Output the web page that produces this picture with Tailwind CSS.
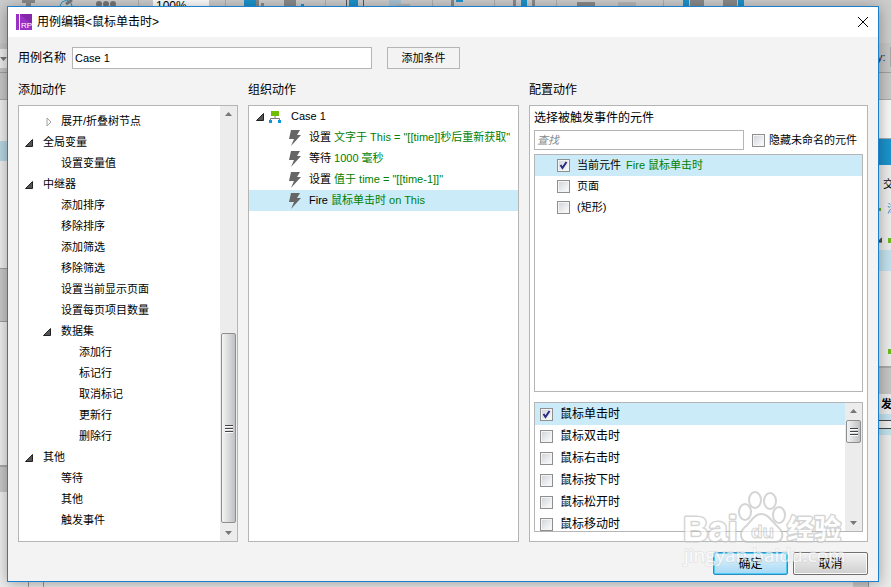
<!DOCTYPE html>
<html lang="zh-CN">
<head>
  <meta charset="UTF-8">
  <title>用例编辑</title>
  <meta name="viewport" content="width=device-width, initial-scale=1.0">
  <script src="https://cdn.jsdelivr.net/npm/@tailwindcss/browser@4"></script>
</head>
<body class="relative h-screen overflow-hidden bg-[#f0f0f0] font-['Liberation_Sans','Noto_Sans_CJK_SC',sans-serif] text-[11px] text-black">

  <!-- Shared icons -->
  <svg class="hidden">
    <symbol id="open" viewBox="0 0 8 8"><path d="M7.5 0.5V7.5H0.5Z" fill="#555" stroke="#222"/></symbol>
    <symbol id="closed" viewBox="0 0 6 10"><path d="M1 1L5 5L1 9Z" fill="#fff" stroke="#a0a0a0"/></symbol>
    <symbol id="bolt" viewBox="0 0 13 16"><path d="M2 0H11L8 5H12L2 16L5 9H0Z" fill="#666"/></symbol>
    <symbol id="check" viewBox="0 0 13 13"><path d="M3.5 6L5.5 9L9.5 3" fill="none" stroke="#2b2b80" stroke-width="2"/></symbol>
    <symbol id="up" viewBox="0 0 7 4"><path d="M0 4L3.5 0L7 4Z" fill="#777"/></symbol>
    <symbol id="down" viewBox="0 0 7 4"><path d="M0 0L3.5 4L7 0Z" fill="#777"/></symbol>
    <symbol id="grip" viewBox="0 0 8 9"><path d="M0 1.5H8M0 4.5H8M0 7.5H8" stroke="#444"/><path d="M0 2.5H8M0 5.5H8M0 8.5H8" stroke="#fff"/></symbol>
  </svg>

  <!-- Application window behind the dialog -->
  <div class="flex h-full flex-col" aria-hidden="true">
    <div class="h-[43px] shrink-0 bg-[#cdcdcd]">
      <svg class="h-2 w-[760px]" viewBox="0 0 760 8">
        <path d="M22 0H35V3H22ZM26 3H31V8H26ZM284 0H296V8H284ZM451 0H454V8H451ZM513 0H516V8H513ZM532 0H535V8H532ZM577 2H595V8H577ZM690 0H704V8H690ZM723 0H737V8H723Z" fill="#8a8a8a"/>
        <path d="M244 0H256V6H244ZM349 0H358V8H349ZM456 0H463V2H456ZM521 0H527V8H521ZM683 0H689V8H683ZM738 0H744V8H738ZM301 4H304V8H301Z" fill="#1b93cc"/>
        <path d="M256 0H259V6H256ZM261 3H264V6H261Z" fill="#8a8a8a"/>
        <path d="M346.5 0V8M363.5 0V8" stroke="#555"/>
        <path d="M138.5 0V8M225.5 0V8M325.5 0V8M432.5 0V8M494.5 0V8M556.5 0V8M663.5 0V8" stroke="#b0b0b0"/>
        <path d="M60 6L62 2L67 0L71 3L72 6" fill="none" stroke="#1b93cc"/>
        <path d="M66 4L72 0" stroke="#777" stroke-width="3"/>
        <circle cx="99" cy="4" r="3" fill="#777"/><circle cx="106" cy="4" r="3" fill="#777"/><circle cx="113" cy="4" r="3" fill="#777"/>
        <path d="M153 0H209V8H153Z" fill="#fff"/>
        <text x="156" y="10" font-size="12" fill="#000">100%</text>
        <path d="M389 0H401V6H389Z" fill="#a9c4d4"/>
        <path d="M618 2H636V8H618ZM396 4H410V6H396Z" fill="#b8b8b8"/>
      </svg>
    </div>
    <div class="flex h-[30px] shrink-0 justify-between border-b border-[#a0a0a0] bg-[#c6c6c6]">
      <div class="mt-1.5 flex h-[19px] w-3 items-center bg-[#eee]"><svg class="h-1 w-[7px]"><use href="#down"/></svg></div>
      <div class="flex w-[14px] items-center gap-1 pb-px">
        <span class="text-[#223]">y:</span>
        <div class="-mr-2 h-5 w-4 shrink-0 border border-[#aaa] bg-[#eee]"></div>
      </div>
    </div>
    <div class="h-[27px] shrink-0 border-b border-[#aaa] bg-[#c9c9c9]"></div>
    <div class="flex min-h-0 flex-1 justify-between">
      <div class="flex w-5 flex-col bg-[#f0f0f0]">
        <div class="mt-[41px] h-5 bg-[#b9d9e5]"></div>
        <div class="mt-[107px] h-[54px] border-y border-[#a0a0a0] bg-[#cacaca]"></div>
        <div class="mt-[143px] h-[27px] border-t-2 border-[#aaa] bg-[#cacaca]"></div>
      </div>
      <div class="mx-2 flex flex-1 justify-between self-end">
        <div class="h-1.5 w-4 border-x border-[#999]"></div>
        <div class="h-1.5 w-4 border-r border-[#999] bg-[#d0d0d0]"></div>
      </div>
      <div class="flex w-[14px] flex-col overflow-hidden bg-[#ececec] whitespace-nowrap">
        <div class="h-[38px] shrink-0 bg-[#f8f8f8]"></div>
        <div class="h-[27px] shrink-0 border-t border-[#aaa] bg-[#1b93cc]"></div>
        <div class="h-[38px] shrink-0 pl-1.5 leading-[38px]">交</div>
        <div class="flex h-3 shrink-0 items-center gap-1.5 pl-px text-[#1b93cc]"><span class="h-[3px] w-[3px] shrink-0 bg-[#6cae1c]"></span>添</div>
        <div class="mt-[15px] flex h-5 shrink-0 items-center gap-1.5"><svg class="h-2 w-[5px] shrink-0"><use href="#open"/></svg><span class="h-[5px] w-[5px] bg-[#6fb81c]"></span></div>
        <div class="h-[21px] shrink-0 bg-[#c2e2ee]"></div>
        <div class="mt-[78px] h-[5px] w-[3px] shrink-0 self-end bg-[#6fb81c]"></div>
        <div class="mt-3 h-7 shrink-0 border-t-2 border-[#aaa] bg-[#c6c6c6]"></div>
        <div class="h-5 shrink-0 pl-1 leading-5 font-bold">发</div>
        <div class="flex h-[21px] shrink-0 items-center bg-[#c2e2ee]"><div class="h-[9px] w-5 shrink-0 border border-[#444] bg-[#eee]"></div></div>
      </div>
    </div>
  </div>

  <!-- Case editor dialog -->
  <div role="dialog" aria-labelledby="title" class="absolute top-1.5 right-3 bottom-[5px] left-[7px] flex flex-col border border-[#1b7fcc] bg-[#f3f3f3] shadow-[0_2px_14px_rgba(0,0,0,0.35)]">
    <header class="flex h-[30px] shrink-0 items-center bg-white pr-2.5 pl-2">
      <svg class="h-4 w-4" viewBox="0 0 16 16">
        <path d="M0 0H3V16H0ZM4 0H16V16H4Z" fill="#9b30c4"/>
        <path d="M4 0H16V11Z" fill="#8427a8"/>
        <text x="5" y="14" font-size="8" fill="#fff">RP</text>
      </svg>
      <h1 id="title" class="ml-[5px] flex-1 text-xs">用例编辑&lt;鼠标单击时&gt;</h1>
      <button aria-label="关闭" class="h-[10px] w-[10px]">
        <svg class="h-full w-full overflow-visible" viewBox="0 0 10 10"><path d="M0 0L10 10M10 0L0 10" stroke="#000"/></svg>
      </button>
    </header>

    <main class="flex min-h-0 flex-1 flex-col px-2.5 pt-2.5 pb-1.5">
      <div class="flex h-[22px] shrink-0 items-center">
        <label for="case-name" class="w-[54px] text-xs">用例名称</label>
        <input id="case-name" value="Case 1" class="h-full w-[300px] border border-[#b5b5b5] bg-white px-0.5">
        <button class="ml-[15px] h-full w-[73px] border border-[#b5b5b5]">添加条件</button>
      </div>

      <div class="mt-3 grid min-h-0 flex-1 grid-cols-[220fr_271fr_339fr] grid-rows-[24px_minmax(0,1fr)] gap-x-2.5">
        <h2 class="text-xs leading-[18px]">添加动作</h2>
        <h2 class="text-xs leading-[18px]">组织动作</h2>
        <h2 class="text-xs leading-[18px]">配置动作</h2>

        <!-- Available actions -->
        <section class="flex overflow-hidden border border-[#b5b5b5] bg-white">
          <ul class="flex-1 pt-[5px] leading-[21px]">
            <li class="flex items-center gap-[9px] pl-[27px]"><svg class="h-2.5 w-1.5"><use href="#closed"/></svg>展开/折叠树节点</li>
            <li class="flex items-center gap-2.5 pl-1.5"><svg class="h-2 w-2"><use href="#open"/></svg>全局变量</li>
            <li class="pl-[42px]">设置变量值</li>
            <li class="flex items-center gap-2.5 pl-1.5"><svg class="h-2 w-2"><use href="#open"/></svg>中继器</li>
            <li class="pl-[42px]">添加排序</li>
            <li class="pl-[42px]">移除排序</li>
            <li class="pl-[42px]">添加筛选</li>
            <li class="pl-[42px]">移除筛选</li>
            <li class="pl-[42px]">设置当前显示页面</li>
            <li class="pl-[42px]">设置每页项目数量</li>
            <li class="flex items-center gap-2.5 pl-6"><svg class="h-2 w-2"><use href="#open"/></svg>数据集</li>
            <li class="pl-[60px]">添加行</li>
            <li class="pl-[60px]">标记行</li>
            <li class="pl-[60px]">取消标记</li>
            <li class="pl-[60px]">更新行</li>
            <li class="pl-[60px]">删除行</li>
            <li class="flex items-center gap-2.5 pl-1.5"><svg class="h-2 w-2"><use href="#open"/></svg>其他</li>
            <li class="pl-[42px]">等待</li>
            <li class="pl-[42px]">其他</li>
            <li class="pl-[42px]">触发事件</li>
          </ul>
          <div class="flex w-[17px] flex-col items-center bg-[#ececec] py-1.5">
            <svg class="h-1 w-[7px]"><use href="#up"/></svg>
            <div class="flex-1"></div>
            <div class="flex h-[190px] w-[15px] items-center justify-center rounded-xs border border-[#8e8e8e] bg-linear-to-r from-[#f4f4f4] to-[#bfc1c4]"><svg class="h-[9px] w-2"><use href="#grip"/></svg></div>
            <svg class="mt-2 h-1 w-[7px]"><use href="#down"/></svg>
          </div>
        </section>

        <!-- Organised actions -->
        <section class="overflow-hidden border border-[#b5b5b5] bg-white">
          <ul class="leading-[21px] whitespace-nowrap">
            <li class="flex items-center pl-[7px]">
              <svg class="h-2 w-2"><use href="#open"/></svg>
              <svg class="ml-[5px] h-3 w-3" viewBox="0 0 12 12"><path d="M2 0H10V5H2Z" fill="#6fbf00"/><path d="M6 5V7M1.5 9V7.5H10.5V9" fill="none" stroke="#777"/><path d="M0 9H3V12H0ZM9 9H12V12H9Z" fill="#0f94d8"/></svg>
              <span class="ml-2.5">Case 1</span>
            </li>
            <li class="flex items-center gap-[7px] pl-10"><svg class="h-4 w-[13px]"><use href="#bolt"/></svg><span>设置 <span class="text-[#008000]">文字于 This = "[[time]]秒后重新获取"</span></span></li>
            <li class="flex items-center gap-[7px] pl-10"><svg class="h-4 w-[13px]"><use href="#bolt"/></svg><span>等待 <span class="text-[#008000]">1000 毫秒</span></span></li>
            <li class="flex items-center gap-[7px] pl-10"><svg class="h-4 w-[13px]"><use href="#bolt"/></svg><span>设置 <span class="text-[#008000]">值于 time = "[[time-1]]"</span></span></li>
            <li class="flex items-center gap-[7px] bg-[#cbebf8] pl-10"><svg class="h-4 w-[13px]"><use href="#bolt"/></svg><span>Fire <span class="text-[#008000]">鼠标单击时 on This</span></span></li>
          </ul>
        </section>

        <!-- Action settings -->
        <section class="flex min-h-0 flex-col border border-[#b5b5b5] bg-white px-1 pt-[3px] pb-[9px]">
          <h3 class="text-xs leading-[18px]">选择被触发事件的元件</h3>
          <div class="mt-[3px] flex h-5 shrink-0 items-center">
            <input type="search" aria-label="查找" placeholder="查找" class="h-full w-[210px] border border-[#b5b5b5] bg-white px-0.5 italic placeholder:text-[#888]">
            <label class="ml-2 flex items-center gap-1 whitespace-nowrap"><input type="checkbox" class="h-[13px] w-[13px] appearance-none border border-[#8e8f8f] bg-linear-to-br from-[#cfd2d8] to-white shadow-[inset_0_0_0_1px_#f4f4f4]">隐藏未命名的元件</label>
          </div>
          <div class="mt-1 min-h-0 flex-1 overflow-hidden border border-[#b5b5b5] leading-[21px]">
            <label class="relative flex items-center gap-[7px] bg-[#cbebf8] pl-[22px]"><input type="checkbox" checked class="h-[13px] w-[13px] appearance-none border border-[#8e8f8f] bg-linear-to-br from-[#cfd2d8] to-white shadow-[inset_0_0_0_1px_#f4f4f4]"><svg class="absolute left-[22px] h-[13px] w-[13px]"><use href="#check"/></svg><span>当前元件 <span class="ml-0.5 text-[#008000]">Fire 鼠标单击时</span></span></label>
            <label class="flex items-center gap-[7px] pl-[22px]"><input type="checkbox" class="h-[13px] w-[13px] appearance-none border border-[#8e8f8f] bg-linear-to-br from-[#cfd2d8] to-white shadow-[inset_0_0_0_1px_#f4f4f4]">页面</label>
            <label class="flex items-center gap-[7px] pl-[22px]"><input type="checkbox" class="h-[13px] w-[13px] appearance-none border border-[#8e8f8f] bg-linear-to-br from-[#cfd2d8] to-white shadow-[inset_0_0_0_1px_#f4f4f4]">(矩形)</label>
          </div>
          <div class="mt-2.5 flex h-[130px] shrink-0 overflow-hidden border border-[#b5b5b5]">
            <div class="flex-1 text-xs leading-[22px]">
              <label class="relative flex h-[22px] items-center gap-[7px] bg-[#cbebf8] pl-[5px]"><input type="checkbox" checked class="h-[13px] w-[13px] appearance-none border border-[#8e8f8f] bg-linear-to-br from-[#cfd2d8] to-white shadow-[inset_0_0_0_1px_#f4f4f4]"><svg class="absolute left-[5px] h-[13px] w-[13px]"><use href="#check"/></svg>鼠标单击时</label>
              <label class="flex h-[22px] items-center gap-[7px] pl-[5px]"><input type="checkbox" class="h-[13px] w-[13px] appearance-none border border-[#8e8f8f] bg-linear-to-br from-[#cfd2d8] to-white shadow-[inset_0_0_0_1px_#f4f4f4]">鼠标双击时</label>
              <label class="flex h-[22px] items-center gap-[7px] pl-[5px]"><input type="checkbox" class="h-[13px] w-[13px] appearance-none border border-[#8e8f8f] bg-linear-to-br from-[#cfd2d8] to-white shadow-[inset_0_0_0_1px_#f4f4f4]">鼠标右击时</label>
              <label class="flex h-[22px] items-center gap-[7px] pl-[5px]"><input type="checkbox" class="h-[13px] w-[13px] appearance-none border border-[#8e8f8f] bg-linear-to-br from-[#cfd2d8] to-white shadow-[inset_0_0_0_1px_#f4f4f4]">鼠标按下时</label>
              <label class="flex h-[22px] items-center gap-[7px] pl-[5px]"><input type="checkbox" class="h-[13px] w-[13px] appearance-none border border-[#8e8f8f] bg-linear-to-br from-[#cfd2d8] to-white shadow-[inset_0_0_0_1px_#f4f4f4]">鼠标松开时</label>
              <label class="flex h-[22px] items-center gap-[7px] pl-[5px]"><input type="checkbox" class="h-[13px] w-[13px] appearance-none border border-[#8e8f8f] bg-linear-to-br from-[#cfd2d8] to-white shadow-[inset_0_0_0_1px_#f4f4f4]">鼠标移动时</label>
            </div>
            <div class="flex w-[17px] flex-col items-center bg-[#ececec] py-1.5">
              <svg class="h-1 w-[7px] shrink-0"><use href="#up"/></svg>
              <div class="mt-[7px] flex h-[23px] w-[15px] items-center justify-center rounded-xs border border-[#8e8e8e] bg-linear-to-r from-[#f4f4f4] to-[#bfc1c4]"><svg class="h-[9px] w-2"><use href="#grip"/></svg></div>
              <div class="flex-1"></div>
              <svg class="h-1 w-[7px] shrink-0"><use href="#down"/></svg>
            </div>
          </div>
        </section>
      </div>

      <footer class="mt-2.5 flex shrink-0 justify-end gap-[5px] text-xs">
        <button class="h-[23px] w-[75px] rounded-xs border border-[#2c8fc4] bg-linear-to-b from-[#e5f4fc] to-[#a6d9f4] shadow-[inset_0_0_0_1px_#4fcaf5]">确定</button>
        <button class="h-[23px] w-[75px] rounded-xs border border-[#707070] bg-linear-to-b from-[#f2f2f2] to-[#cfcfcf] shadow-[inset_0_0_0_1px_#fafafa]">取消</button>
      </footer>
    </main>
  </div>

  <!-- Site watermark -->
  <svg class="pointer-events-none absolute right-11 bottom-4 h-[84px] w-[168px] opacity-70" viewBox="0 0 168 84" fill="#fff" stroke="#c4c4c4" stroke-linejoin="round">
    <text x="4" y="54" font-size="35" font-weight="bold" paint-order="stroke" stroke-width="3">Bai</text>
    <g stroke-width="2">
      <ellipse cx="76" cy="13" rx="6" ry="8"/>
      <ellipse cx="91" cy="14" rx="6" ry="8"/>
      <ellipse cx="66" cy="25" rx="6" ry="8"/>
      <ellipse cx="100" cy="28" rx="6" ry="8"/>
      <path d="M82 27C75 27 72 35 66 40C59 46 62 55 69 55H96C104 55 106 46 99 40C93 35 90 27 82 27Z"/>
    </g>
    <text x="72" y="51" font-size="19" font-weight="bold">du</text>
    <text x="108" y="52" font-size="27" font-weight="bold" paint-order="stroke" stroke-width="3">经验</text>
    <text x="5" y="75" font-size="19" font-family="Open Sans" paint-order="stroke" stroke-opacity="0.4" stroke-width="2">jingyan.baidu.com</text>
  </svg>
</body>
</html>
